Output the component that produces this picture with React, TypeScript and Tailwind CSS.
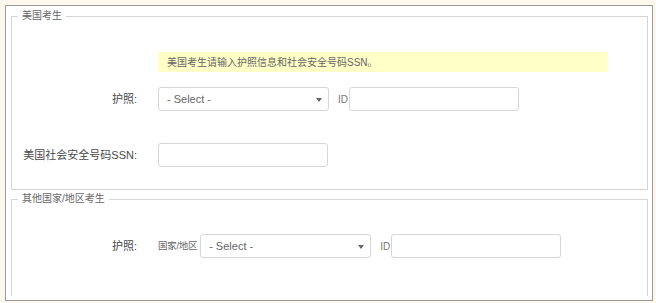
import React from "react"

const font = { fontFamily: '"Liberation Sans", "Noto Sans CJK SC", sans-serif' }

function FakeSelect({ width }: { width: string }) {
  return (
    <div
      className={`relative flex h-[24px] ${width} items-center rounded-[3px] border border-[#d6d6d6] bg-white pl-[8px] text-[11px] text-[#666]`}
    >
      - Select -
      <svg className="absolute right-[6px] top-[10px]" width="6" height="4" viewBox="0 0 6 4">
        <path d="M0 0 L6 0 L3 4 Z" fill="#666" />
      </svg>
    </div>
  )
}

function TextBox({ width }: { width: string }) {
  return <div className={`h-[24px] ${width} rounded-[3px] border border-[#d6d6d6] bg-white`} />
}

function Label({ children }: { children: React.ReactNode }) {
  return (
    <div className="w-[126px] shrink-0 pr-[1px] text-right text-[11px] text-[#4a4a4a]">{children}</div>
  )
}

export default function App() {
  return (
    <div className="min-h-[303px] bg-[#fdf8ee] pt-[5px]" style={font}>
      <div className="ml-[5px] flex h-[296px] w-[648px] flex-col border border-[#9a9a9a] bg-white pb-[4px] pl-[5px] pr-[4px] pt-[4px]">
        {/* 美国考生 */}
        <fieldset className="m-0 w-[637px] border border-[#d4d4d4] pb-[22px]">
          <legend className="ml-[6px] px-[4px] text-[10px] leading-[12px] text-[#666]">美国考生</legend>

          <div className="ml-[146px] mt-[30px] flex h-[20px] w-[450px] items-center bg-[#ffffc6] pl-[9px] text-[10px] text-[#666]">
            美国考生请输入护照信息和社会安全号码SSN。
          </div>

          <div className="mt-[15px] flex items-center">
            <Label>护照:</Label>
            <div className="ml-[20px] flex items-center">
              <FakeSelect width="w-[171px]" />
              <span className="ml-[9px] text-[10px] text-[#777]">ID</span>
              <div className="ml-[1px]">
                <TextBox width="w-[170px]" />
              </div>
            </div>
          </div>

          <div className="mt-[32px] flex items-center">
            <Label>美国社会安全号码SSN:</Label>
            <div className="ml-[20px]">
              <TextBox width="w-[170px]" />
            </div>
          </div>
        </fieldset>

        {/* 其他国家/地区考生 */}
        <fieldset className="m-0 mt-[3px] w-[637px] flex-1 border border-b-0 border-[#d4d4d4]">
          <legend className="ml-[6px] px-[4px] text-[10px] leading-[12px] text-[#666]">其他国家/地区考生</legend>

          <div className="mt-[29px] flex items-center">
            <Label>护照:</Label>
            <div className="ml-[20px] flex items-center">
              <span className="text-[9.5px] tracking-[-0.3px] text-[#666]">国家/地区</span>
              <div className="ml-[3px]">
                <FakeSelect width="w-[171px]" />
              </div>
              <span className="ml-[9px] text-[10px] text-[#777]">ID</span>
              <div className="ml-[1px]">
                <TextBox width="w-[170px]" />
              </div>
            </div>
          </div>
        </fieldset>
      </div>
    </div>
  )
}
